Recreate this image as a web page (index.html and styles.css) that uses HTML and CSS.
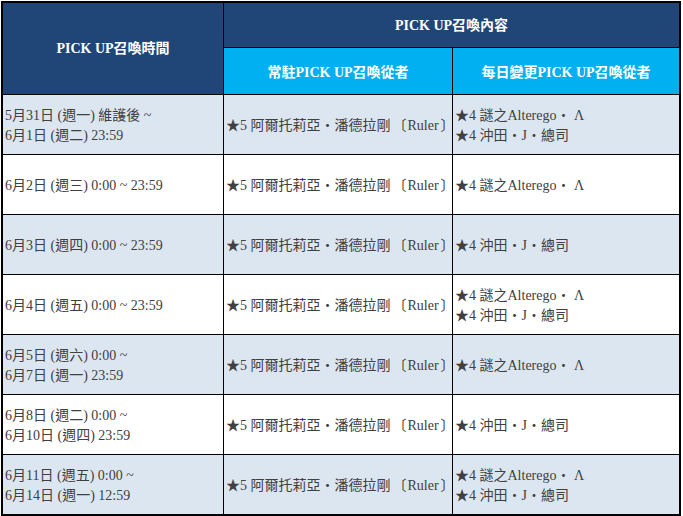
FILE: index.html
```html
<!DOCTYPE html>
<html lang="zh-Hant">
<head>
<meta charset="utf-8">
<title>PICK UP召喚</title>
<link rel="stylesheet" href="styles.css">
</head>
<body>
<table class="sched">
  <colgroup>
    <col class="c1"><col class="c2"><col class="c3">
  </colgroup>
  <thead>
    <tr class="h1">
      <th rowspan="2" class="navy">PICK UP召喚時間</th>
      <th colspan="2" class="navy last">PICK UP召喚內容</th>
    </tr>
    <tr class="h2">
      <th class="cyan">常駐PICK UP召喚從者</th>
      <th class="cyan last">每日變更PICK UP召喚從者</th>
    </tr>
  </thead>
  <tbody>
    <tr class="alt">
      <td>5月31日 (週一) 維護後 ~<br>6月1日 (週二) 23:59</td>
      <td>★5 阿爾托莉亞・潘德拉剛<span class="br">〔</span>Ruler<span class="br">〕</span></td>
      <td class="last">★4 謎之Alterego・ Λ<br>★4 沖田・J・總司</td>
    </tr>
    <tr>
      <td>6月2日 (週三) 0:00 ~ 23:59</td>
      <td>★5 阿爾托莉亞・潘德拉剛<span class="br">〔</span>Ruler<span class="br">〕</span></td>
      <td class="last">★4 謎之Alterego・ Λ</td>
    </tr>
    <tr class="alt">
      <td>6月3日 (週四) 0:00 ~ 23:59</td>
      <td>★5 阿爾托莉亞・潘德拉剛<span class="br">〔</span>Ruler<span class="br">〕</span></td>
      <td class="last">★4 沖田・J・總司</td>
    </tr>
    <tr>
      <td>6月4日 (週五) 0:00 ~ 23:59</td>
      <td>★5 阿爾托莉亞・潘德拉剛<span class="br">〔</span>Ruler<span class="br">〕</span></td>
      <td class="last">★4 謎之Alterego・ Λ<br>★4 沖田・J・總司</td>
    </tr>
    <tr class="alt">
      <td>6月5日 (週六) 0:00 ~<br>6月7日 (週一) 23:59</td>
      <td>★5 阿爾托莉亞・潘德拉剛<span class="br">〔</span>Ruler<span class="br">〕</span></td>
      <td class="last">★4 謎之Alterego・ Λ</td>
    </tr>
    <tr>
      <td>6月8日 (週二) 0:00 ~<br>6月10日 (週四) 23:59</td>
      <td>★5 阿爾托莉亞・潘德拉剛<span class="br">〔</span>Ruler<span class="br">〕</span></td>
      <td class="last">★4 沖田・J・總司</td>
    </tr>
    <tr class="alt final">
      <td>6月11日 (週五) 0:00 ~<br>6月14日 (週一) 12:59</td>
      <td>★5 阿爾托莉亞・潘德拉剛<span class="br">〔</span>Ruler<span class="br">〕</span></td>
      <td class="last">★4 謎之Alterego・ Λ<br>★4 沖田・J・總司</td>
    </tr>
  </tbody>
</table>
</body>
</html>
```

FILE: styles.css
```css
html, body {
  margin: 0;
  padding: 0;
  background: #ffffff;
}

body {
  padding: 1px 0 0 1px;
  font-family: "Liberation Serif", "Noto Sans CJK TC", serif;
  font-size: 14px;
  color: #404040;
}

.sched {
  width: 680px;
  table-layout: fixed;
  border-collapse: separate;
  border-spacing: 0;
  border: 2px solid #000;
}

.c1 { width: 221px; }
.c2 { width: 229px; }
.c3 { width: 226px; }

.sched th,
.sched td {
  border-right: 1px solid #000;
  border-bottom: 1px solid #000;
  vertical-align: middle;
  box-sizing: border-box;
}

.sched .last {
  border-right: none;
}

.sched th {
  color: #ffffff;
  font-weight: bold;
  text-align: center;
  padding: 1px 0 0 0;
  line-height: 20px;
}

.sched th.cyan {
  padding-top: 3px;
}

.navy { background: #1f4677; }
.cyan { background: #00b0f0; }

.h1 { height: 45px; }
.h2 { height: 47px; }

.sched td {
  height: 60px;
  padding: 3px 0 0 2px;
  line-height: 20px;
  background: #ffffff;
  white-space: nowrap;
}

.br {
  display: inline-block;
  padding: 0 1px 0 2px;
}

.sched tr.alt td {
  background: #dce6f1;
}

.sched tr.final td {
  border-bottom: none;
  height: 59px;
}
```
